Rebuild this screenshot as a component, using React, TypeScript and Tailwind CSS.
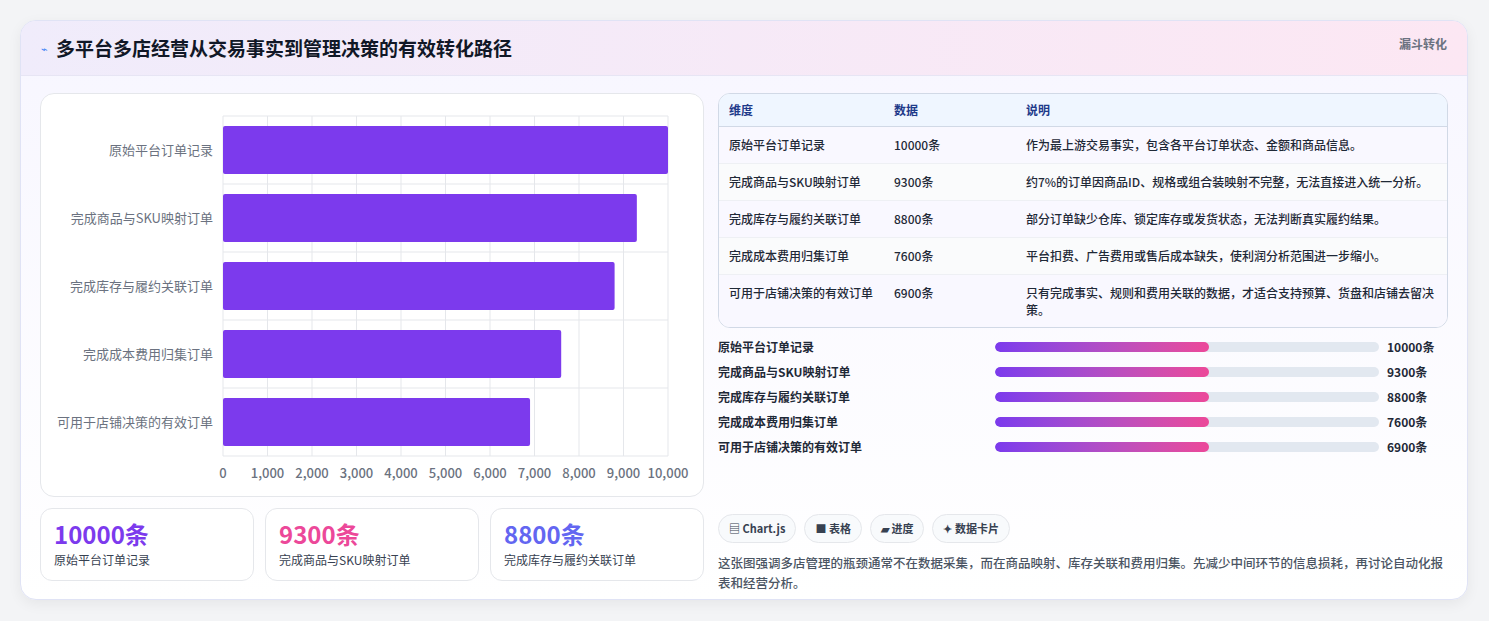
import React from "react";

const rows = [
  { n: "原始平台订单记录", v: 10000, d: "作为最上游交易事实，包含各平台订单状态、金额和商品信息。" },
  { n: "完成商品与SKU映射订单", v: 9300, d: "约7%的订单因商品ID、规格或组合装映射不完整，无法直接进入统一分析。" },
  { n: "完成库存与履约关联订单", v: 8800, d: "部分订单缺少仓库、锁定库存或发货状态，无法判断真实履约结果。" },
  { n: "完成成本费用归集订单", v: 7600, d: "平台扣费、广告费用或售后成本缺失，使利润分析范围进一步缩小。" },
  { n: "可用于店铺决策的有效订单", v: 6900, d: "只有完成事实、规则和费用关联的数据，才适合支持预算、货盘和店铺去留决策。" },
];

function Chart() {
  const x0 = 182, w = 445, y0 = 22, band = 68;
  return (
    <svg width="663" height="403" className="block">
      {Array.from({ length: 11 }).map((_, i) => (
        <line key={i} x1={x0 + i * 44.5} x2={x0 + i * 44.5} y1={y0} y2={y0 + 5 * band} stroke="#e5e7eb" />
      ))}
      {Array.from({ length: 6 }).map((_, i) => (
        <line key={i} x1={x0} x2={x0 + w} y1={y0 + i * band} y2={y0 + i * band} stroke="#e5e7eb" />
      ))}
      {rows.map((r, i) => (
        <g key={i}>
          <rect x={x0} y={y0 + i * band + 10} width={(r.v / 10000) * w} height={48} rx={2} fill="#7c3aed" />
          <text x={x0 - 10} y={y0 + i * band + 39} textAnchor="end" fontSize="13" fill="#6b7280">{r.n}</text>
        </g>
      ))}
      {Array.from({ length: 11 }).map((_, i) => (
        <text key={i} x={x0 + i * 44.5} y={384} textAnchor="middle" fontSize="13" fill="#6b7280" fontWeight="500">
          {(i * 1000).toLocaleString("en-US")}
        </text>
      ))}
    </svg>
  );
}

export default function App() {
  return (
    <div className="min-h-[621px] bg-[#f3f4f6] pt-[20px] px-[20px]" style={{ fontFamily: '"Noto Sans CJK SC", "Noto Sans", sans-serif' }}>
      <div className="w-[1448px] h-[580px] rounded-[16px] border border-[#e0e3f5] bg-gradient-to-b from-[#f7f6ff] to-white shadow-[0_4px_14px_rgba(0,0,0,0.06)] overflow-hidden">
        <div className="h-[55px] flex items-center justify-between px-[20px] bg-gradient-to-r from-[#f0ecfb] to-[#fce7f3] border-b border-[#e7e5f4]">
          <div className="flex items-center gap-[8px]">
            <span className="text-[#3b82f6] text-[11px]">⌁</span>
            <span className="text-[19px] font-bold text-[#111827]">多平台多店经营从交易事实到管理决策的有效转化路径</span>
          </div>
          <span className="text-[12px] font-bold text-[#6b7280] self-start mt-[14px]">漏斗转化</span>
        </div>
        <div className="flex gap-[14px] px-[19px] pt-[17px]">
          <div className="w-[664px] flex flex-col gap-[11px]">
            <div className="h-[404px] rounded-[14px] border border-[#e5e7eb] bg-white overflow-hidden">
              <Chart />
            </div>
            <div className="grid grid-cols-3 gap-[11px]">
              {[
                ["10000条", "text-[#7c3aed]", rows[0].n],
                ["9300条", "text-[#ec4899]", rows[1].n],
                ["8800条", "text-[#6366f1]", rows[2].n],
              ].map(([v, c, n]) => (
                <div key={v} className="h-[73px] rounded-[12px] border border-[#e5e7eb] bg-white px-[13px] pt-[10px]">
                  <div className={`text-[24px] font-bold leading-[30px] ${c}`}>{v}</div>
                  <div className="text-[12px] text-[#374151] mt-[2px]">{n}</div>
                </div>
              ))}
            </div>
          </div>
          <div className="flex-1 flex flex-col">
            <div className="rounded-[12px] border border-[#d1d9e6] bg-white overflow-hidden">
              <div className="flex h-[33px] items-center bg-[#eff6ff] border-b border-[#d1d9e6] text-[12px] font-bold text-[#1e3a8a]">
                <div className="w-[175px] pl-[10px]">维度</div>
                <div className="w-[132px]">数据</div>
                <div className="flex-1">说明</div>
              </div>
              {rows.map((r, i) => (
                <div key={i} className={`flex items-start text-[12px] text-[#1f2937] border-b border-[#eef0f4] last:border-b-0 py-[9px] ${i % 2 ? "bg-[#fafbfc]" : "bg-[#f9f8ff]"}`}>
                  <div className="w-[175px] pl-[10px] font-medium">{r.n}</div>
                  <div className="w-[132px] font-medium">{r.v}条</div>
                  <div className="flex-1 pr-[10px] leading-[17px] font-medium">{r.d}</div>
                </div>
              ))}
            </div>
            <div className="mt-[10px] flex flex-col gap-[7px]">
              {rows.map((r, i) => (
                <div key={i} className="flex items-center h-[18px] text-[12px] font-bold text-[#1f2937]">
                  <div className="w-[277px]">{r.n}</div>
                  <div className="w-[384px] h-[10px] rounded-full bg-[#e2e8f0] overflow-hidden">
                    <div className="h-full w-[214px] rounded-full bg-gradient-to-r from-[#7c3aed] to-[#ec4899]" />
                  </div>
                  <div className="ml-[8px]">{r.v}条</div>
                </div>
              ))}
            </div>
            <div className="mt-[58px] flex gap-[8px]">
              {["▤ Chart.js", "■ 表格", "▰ 进度", "✦ 数据卡片"].map((t) => (
                <span key={t} className="h-[29px] px-[10px] flex items-center rounded-full border border-[#e5e7eb] bg-[#f8fafc] text-[11px] font-bold text-[#374151]">{t}</span>
              ))}
            </div>
            <p className="mt-[10px] text-[12.5px] leading-[20px] text-[#4b5563] font-medium">
              这张图强调多店管理的瓶颈通常不在数据采集，而在商品映射、库存关联和费用归集。先减少中间环节的信息损耗，再讨论自动化报表和经营分析。
            </p>
          </div>
        </div>
      </div>
    </div>
  );
}
